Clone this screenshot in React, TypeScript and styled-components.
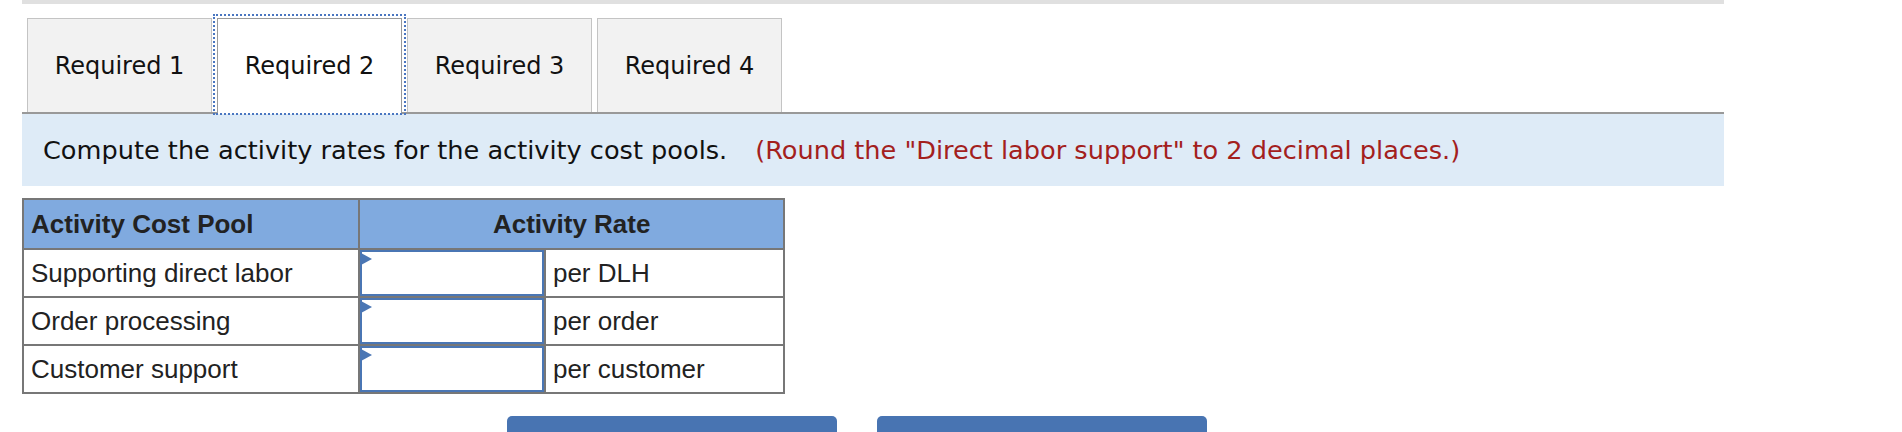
import styled, { createGlobalStyle } from 'styled-components';

const GlobalStyle = createGlobalStyle`
    body {
        margin: 0;
        background: #ffffff;
    }
`;

const verdana = `"DejaVu Sans", Verdana, sans-serif`;
const arial = `"Liberation Sans", Arial, sans-serif`;

const Page = styled.div`
    width: 1702px;
    margin-left: 22px;
`;

const TopBar = styled.div`
    height: 4px;
    background-color: #e0e0e0;
`;

const TabStrip = styled.div`
    display: flex;
    gap: 5px;
    padding: 14px 5px 0;
    border-bottom: 2px solid #999999;
`;

const Tab = styled.button<{ active: boolean }>`
    position: relative;
    box-sizing: border-box;
    width: 185px;
    height: 94px;
    padding: 0;
    border: 1px solid #c4c4c4;
    border-bottom: none;
    background-color: #f2f2f2;
    color: #111111;
    font-family: ${verdana};
    font-size: 24px;
    cursor: pointer;
    ${props => props.active && `
        background-color: #ffffff;
        border-color: #9a9a9a;
        height: 96px;
        padding-bottom: 2px;
        margin-bottom: -2px;
        &::after {
            content: '';
            position: absolute;
            top: -5px;
            left: -5px;
            right: -5px;
            bottom: -1px;
            border: 2px dotted #4a76c0;
        }
    `}
`;

const Instructions = styled.div`
    display: flex;
    align-items: center;
    height: 72px;
    padding-left: 21px;
    background-color: #deebf7;
    color: #111111;
    font-family: ${verdana};
    font-size: 25.6px;
`;

const Note = styled.span`
    color: #a3201d;
    margin-left: 28px;
`;

const Table = styled.table`
    margin-top: 12px;
    width: 763px;
    border-collapse: collapse;
    font-family: ${arial};
    font-size: 26px;
    color: #222222;
`;

const HeadCell = styled.th<{ center?: boolean }>`
    height: 48px;
    padding: 0 7px;
    border: 2px solid #777777;
    background-color: #80aadf;
    font-weight: bold;
    text-align: ${props => (props.center ? 'center' : 'left')};
`;

const Cell = styled.td<{ width: number }>`
    width: ${props => props.width}px;
    height: 46px;
    padding: 0 7px;
    border: 2px solid #777777;
    box-sizing: border-box;
`;

const InputCell = styled.td`
    width: 185px;
    height: 46px;
    padding: 0;
    border: 2px solid #777777;
`;

const InputBox = styled.div`
    position: relative;
    box-sizing: border-box;
    height: 46px;
    border: 2px solid #4a76b4;
    background-color: #ffffff;

    &::before {
        content: '';
        position: absolute;
        top: 1px;
        left: -1px;
        border-left: 11px solid #4a76b4;
        border-top: 6px solid transparent;
        border-bottom: 6px solid transparent;
    }
`;

const ButtonRow = styled.div`
    display: flex;
    gap: 40px;
    margin-top: 22px;
    padding-left: 485px;
`;

const NavButton = styled.button`
    width: 330px;
    height: 40px;
    border: none;
    border-radius: 5px 5px 0 0;
    background-color: #4874b2;
`;

const tabs = ['Required 1', 'Required 2', 'Required 3', 'Required 4'];

const rows = [
    { pool: 'Supporting direct labor', unit: 'per DLH' },
    { pool: 'Order processing', unit: 'per order' },
    { pool: 'Customer support', unit: 'per customer' },
];

const App = () => {
    return (
        <>
            <GlobalStyle />
            <Page>
                <TopBar />
                <TabStrip>
                    {tabs.map((tab, index) => (
                        <Tab key={tab} active={index === 1}>
                            {tab}
                        </Tab>
                    ))}
                </TabStrip>
                <Instructions>
                    Compute the activity rates for the activity cost pools.
                    <Note>(Round the "Direct labor support" to 2 decimal places.)</Note>
                </Instructions>
                <Table>
                    <thead>
                        <tr>
                            <HeadCell>Activity Cost Pool</HeadCell>
                            <HeadCell center colSpan={2}>Activity Rate</HeadCell>
                        </tr>
                    </thead>
                    <tbody>
                        {rows.map(row => (
                            <tr key={row.pool}>
                                <Cell width={338}>{row.pool}</Cell>
                                <InputCell>
                                    <InputBox />
                                </InputCell>
                                <Cell width={240}>{row.unit}</Cell>
                            </tr>
                        ))}
                    </tbody>
                </Table>
                <ButtonRow>
                    <NavButton />
                    <NavButton />
                </ButtonRow>
            </Page>
        </>
    );
};

export default App;
